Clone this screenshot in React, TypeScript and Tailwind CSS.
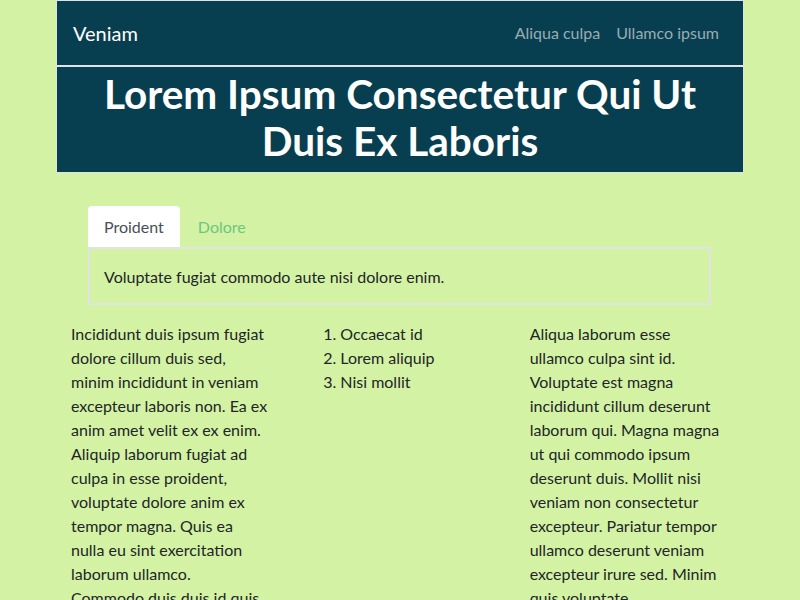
const col1 = [
  "Incididunt duis ipsum fugiat",
  "dolore cillum duis sed,",
  "minim incididunt in veniam",
  "excepteur laboris non. Ea ex",
  "anim amet velit ex ex enim.",
  "Aliquip laborum fugiat ad",
  "culpa in esse proident,",
  "voluptate dolore anim ex",
  "tempor magna. Quis ea",
  "nulla eu sint exercitation",
  "laborum ullamco.",
  "Commodo duis duis id quis.",
];

const col3 = [
  "Aliqua laborum esse",
  "ullamco culpa sint id.",
  "Voluptate est magna",
  "incididunt cillum deserunt",
  "laborum qui. Magna magna",
  "ut qui commodo ipsum",
  "deserunt duis. Mollit nisi",
  "veniam non consectetur",
  "excepteur. Pariatur tempor",
  "ullamco deserunt veniam",
  "excepteur irure sed. Minim",
  "quis voluptate.",
];

export default function App() {
  return (
    <div
      className="h-[600px] overflow-hidden bg-[#d4f2a4] text-[#212529]"
      style={{ fontFamily: 'Lato, "Noto Sans", sans-serif' }}
    >
      <div className="mx-[56px] border border-[#dfe3e6] bg-[#083f50]">
        <nav className="flex h-[64px] items-center justify-between px-4">
          <span className="text-[20px] text-white">Veniam</span>
          <div className="flex text-[16px] text-[#9aacb3]">
            <span className="px-2">Aliqua culpa</span>
            <span className="px-2">Ullamco ipsum</span>
          </div>
        </nav>
        <div className="border-t-2 border-[#dfe3e6] px-4 pt-[3px] pb-[8px] text-center text-[40.5px] font-bold leading-[47px] text-white">
          Lorem Ipsum Consectetur Qui Ut
          <br />
          Duis Ex Laboris
        </div>
      </div>

      <div className="mx-[88px] mt-[33px]">
        <div className="flex">
          <div className="rounded-t-[4px] bg-white px-4 py-[8px] text-[16px] leading-[25px] text-[#495057]">
            Proident
          </div>
          <div className="px-[18px] py-[8px] text-[16px] leading-[25px] text-[#6cc77e]">Dolore</div>
        </div>
        <div className="mr-[1px] border-2 border-[#dfe3e6] px-[14px] pt-[16px] pb-[14px] text-[16px] leading-[24px]">
          Voluptate fugiat commodo aute nisi dolore enim.
        </div>
      </div>

      <div className="mx-[56px] mt-[17px] grid grid-cols-3 text-[16px] leading-[24px]">
        <div className="px-[15px]">
          {col1.map((l) => (
            <div key={l} className="whitespace-nowrap">
              {l}
            </div>
          ))}
        </div>
        <div className="px-[15px]">
          <ol className="list-decimal pl-10">
            <li>Occaecat id</li>
            <li>Lorem aliquip</li>
            <li>Nisi mollit</li>
          </ol>
        </div>
        <div className="px-[15px]">
          {col3.map((l) => (
            <div key={l} className="whitespace-nowrap">
              {l}
            </div>
          ))}
        </div>
      </div>
    </div>
  );
}
